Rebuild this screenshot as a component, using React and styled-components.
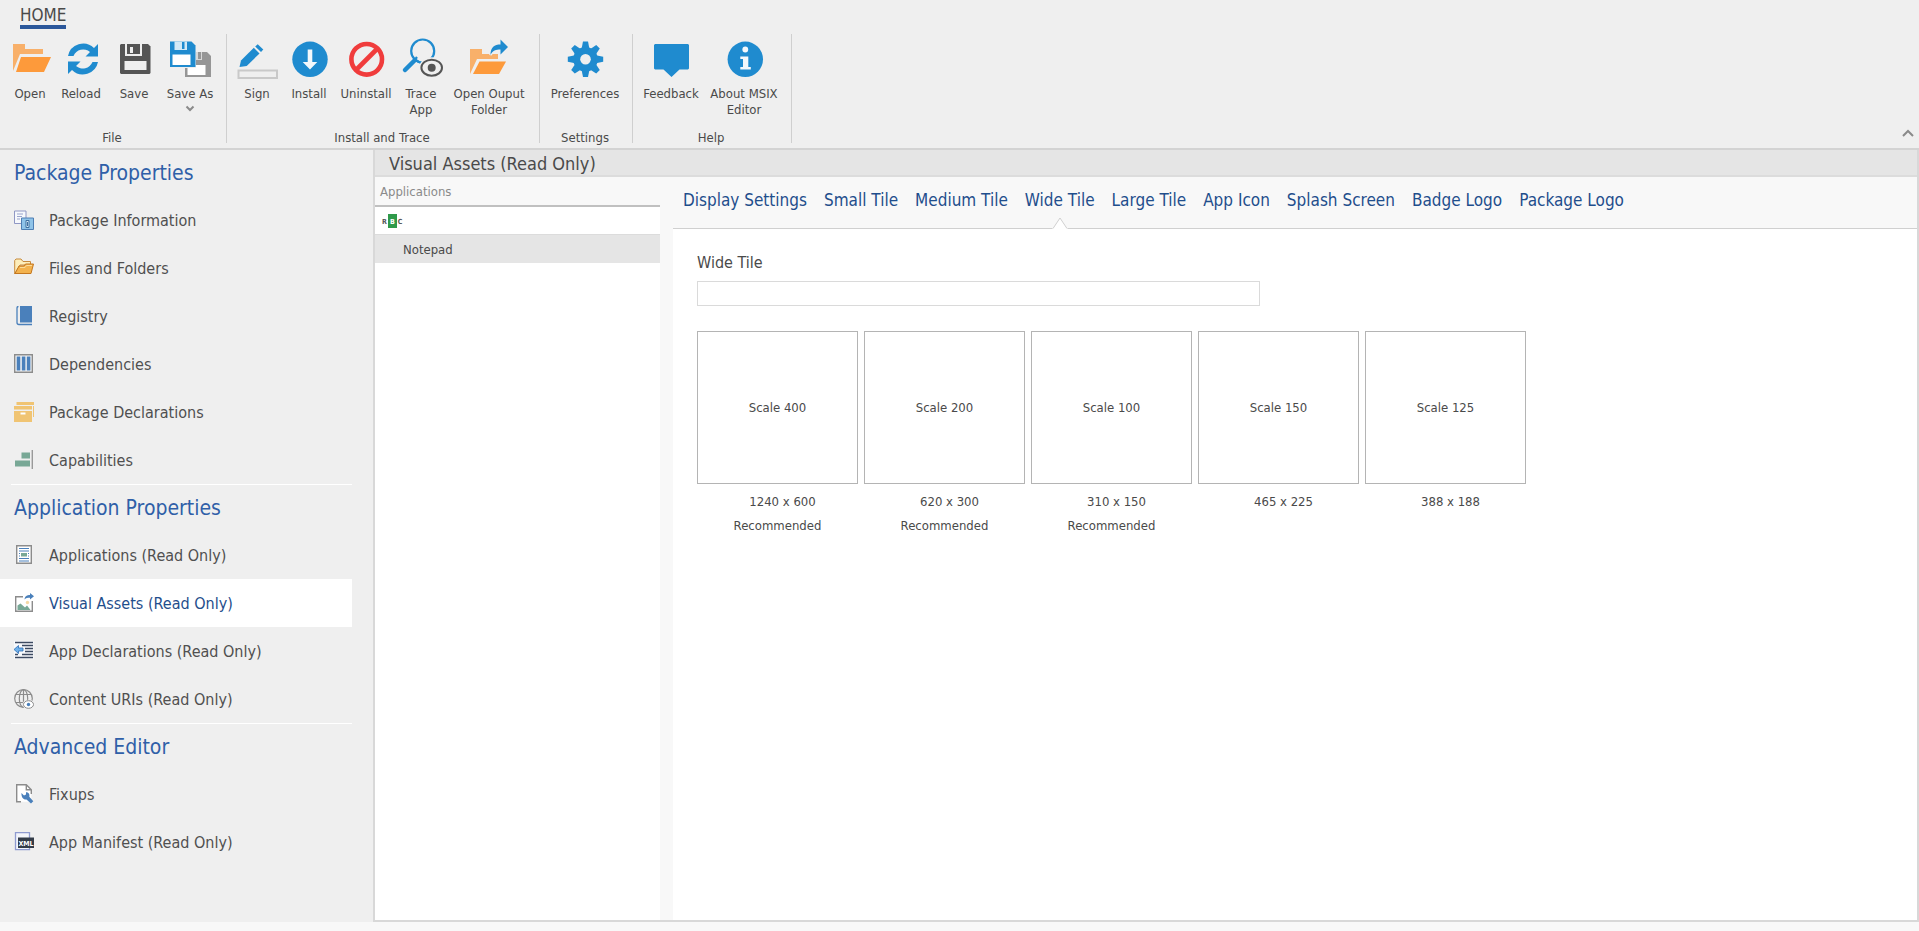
import { useState } from 'react'
import styled, { createGlobalStyle } from 'styled-components'

const GlobalStyle = createGlobalStyle`
  * {
    box-sizing: border-box;
  }

  body {
    margin: 0;
    background: #f8f8f8;
    color: #4a4a4a;
    font-family: "DejaVu Sans Condensed", "DejaVu Sans", Tahoma, sans-serif;
    font-size: 13px;
  }

  button, input {
    font-family: inherit;
    font-size: inherit;
    color: inherit;
  }
`

const Page = styled.div`
  min-height: 100vh;
  display: flex;
  flex-direction: column;
  padding-bottom: 9px;
`

/* ---------- ribbon ---------- */

const Ribbon = styled.header`
  position: relative;
  background: #efefef;
  border-bottom: 2px solid #d3d3d3;
`

const RibbonTabs = styled.div`
  display: flex;
  padding: 5px 20px 0;
`

const RibbonTab = styled.button`
  border: 0;
  border-bottom: 4px solid #2b579a;
  padding: 0;
  background: none;
  font-size: 17px;
  line-height: 20px;
  cursor: pointer;
`

const RibbonGroups = styled.div`
  display: flex;
  padding: 5px 0;
`

const RibbonGroup = styled.section`
  height: 109px;
  display: flex;
  flex-direction: column;
  justify-content: space-between;
  padding: 0 7px 0 5px;
  border-right: 1px solid #cfcfcf;
`

const RibbonItems = styled.div`
  display: flex;
`

const RibbonButton = styled.button`
  width: ${(props) => props.$width}px;
  display: flex;
  flex-direction: column;
  align-items: center;
  border: 0;
  padding: 4px 0 0;
  background: none;
  line-height: 16px;
  white-space: pre;
  cursor: pointer;
`

const RibbonIcon = styled.svg`
  width: 40px;
  height: 40px;
  margin-bottom: 8px;
  overflow: visible;
`

const DropArrow = styled.svg`
  width: 10px;
  height: 12px;
`

const GroupCaption = styled.div`
  line-height: 10px;
  text-align: center;
`

const CollapseButton = styled.button`
  position: absolute;
  right: 4px;
  bottom: 6px;
  display: flex;
  border: 0;
  padding: 0;
  background: none;
  cursor: pointer;
`

/* ---------- sidebar ---------- */

const Main = styled.div`
  flex: 1;
  display: flex;
`

const Sidebar = styled.nav`
  flex: 0 0 373px;
  background: #efefef;
  padding-right: 21px;
`

const SidebarSection = styled.section`
  & + & h2::before {
    content: "";
    display: block;
    height: 1px;
    margin-left: -3px;
    background: #ffffff;
  }
`

const SidebarTitle = styled.h2`
  margin: 0;
  padding-left: 14px;
  font-size: 21px;
  font-weight: normal;
  line-height: 46px;
  color: #2f5fa8;
`

const SidebarLink = styled.a`
  height: 48px;
  display: flex;
  align-items: center;
  gap: 15px;
  padding: 0 0 0 14px;
  font-size: 16px;
  text-decoration: none;
  color: ${(props) => (props.$active ? '#1f4e8c' : '#505050')};
  background: ${(props) => (props.$active ? '#ffffff' : 'transparent')};
`

const SidebarIcon = styled.svg`
  width: 20px;
  height: 20px;
`

/* ---------- content ---------- */

const Content = styled.main`
  flex: 1;
  display: flex;
  flex-direction: column;
  border: 2px solid #d8d8d8;
  border-top: 0;
`

const ContentTitle = styled.h1`
  margin: 0;
  padding: 2px 0 0 14px;
  background: #e5e5e5;
  border-bottom: 2px solid #dcdcdc;
  font-size: 18px;
  font-weight: normal;
  line-height: 23px;
`

const Columns = styled.div`
  flex: 1;
  display: flex;
  gap: 13px;
  background: #f8f8f8;
`

const AppList = styled.section`
  flex: 0 0 285px;
  display: flex;
  flex-direction: column;
`

const AppListHeader = styled.div`
  padding: 2px 0 0 5px;
  border-bottom: 2px solid #c0c0c0;
  line-height: 26px;
  color: #8a8a8a;
`

const FilterRow = styled.label`
  height: 28px;
  display: flex;
  align-items: center;
  gap: 4px;
  padding-left: 7px;
  border-bottom: 1px solid #dcdcdc;
  background: #ffffff;
`

const FilterInput = styled.input`
  flex: 1;
  min-width: 0;
  border: 0;
  outline: 0;
  background: none;
`

const AppListBody = styled.div`
  flex: 1;
  background: #ffffff;
`

const AppRow = styled.button`
  width: 100%;
  border: 0;
  padding: 2px 0 0 28px;
  background: #e5e5e5;
  line-height: 26px;
  text-align: left;
`

const Details = styled.section`
  flex: 1;
  display: flex;
  flex-direction: column;
`

const Tabs = styled.div`
  height: 52px;
  display: flex;
  gap: 17px;
  padding-left: 10px;
  border-bottom: 1px solid #d0d0d0;
`

const Tab = styled.button`
  position: relative;
  border: 0;
  padding: 0 0 6px;
  background: none;
  font-size: 17px;
  color: #1f4e8c;
  white-space: nowrap;
  cursor: pointer;
`

const TabPointer = styled.svg`
  position: absolute;
  left: 50%;
  bottom: -1px;
  width: 16px;
  height: 12px;
  margin-left: -8px;
`

const TabPanel = styled.div`
  flex: 1;
  padding: 23px 24px;
  background: #ffffff;
`

const FieldLabel = styled.label`
  display: block;
  font-size: 16px;
  line-height: 22px;
`

const PathInput = styled.input`
  display: block;
  width: 563px;
  height: 25px;
  margin: 7px 0 25px;
  border: 1px solid #dadada;
  background: #ffffff;
`

const Tiles = styled.div`
  display: flex;
  gap: 6px;
`

const Tile = styled.figure`
  width: 161px;
  margin: 0;
  text-align: center;
`

const TileBox = styled.button`
  display: block;
  width: 100%;
  height: 153px;
  border: 1px solid #b4b4b4;
  padding: 0;
  background: #ffffff;
`

const TileSize = styled.figcaption`
  padding: 6px 0 0 10px;
  line-height: 24px;
`

const TileNote = styled.div`
  line-height: 24px;
`

const BLUE = '#1f8bcf'

const ribbonIcons = {
  open: (
    <>
      <path d="M3 6h12v5h18v5H10L3 33z" fill="#f8b06a" />
      <path d="M11 19h30l-7 15H6z" fill="#fd9a3b" />
    </>
  ),
  reload: (
    <g fill={BLUE}>
      <path d="M7 18A15.500 15.500 0 0 1 33 10L37 6V18.500H24.500L29 14A10.500 10.500 0 0 0 12.500 18z" />
      <path d="M7 18A15.500 15.500 0 0 1 33 10L37 6V18.500H24.500L29 14A10.500 10.500 0 0 0 12.500 18z" transform="rotate(180 22 21)" />
    </g>
  ),
  save: (
    <>
      <path d="M7 6H34L36.500 8.500V35L35.500 36H7L6 35V7z" fill="#555" />
      <path d="M12 6v11h15V6" fill="none" stroke="#efefef" strokeWidth="2" />
      <path d="M16 9h3v6h-3z" fill="#efefef" />
      <path d="M10.500 23h22v9h-22z" fill="#efefef" />
    </>
  ),
  saveAs: (
    <>
      <path d="M15 14H37L41 18V39H15z" fill="#969696" />
      <path d="M23 14h9v8h-9z" fill="#d8d8d8" />
      <path d="M28 14h3v7h-3z" fill="#969696" />
      <path d="M17.500 27h18v10h-18z" fill="#fff" />
      <path d="M-0.500 3H22L26 7V30H-0.500z" fill="#efefef" />
      <path d="M0 3.500H21.500L25.500 7.500V29H0z" fill={BLUE} />
      <path d="M4.500 3.500H17v8.500H4.500z" fill="#d3e9f6" />
      <path d="M12 4h2.500v7H12z" fill={BLUE} />
      <path d="M2.500 16.500h18v10.500h-18z" fill="#fff" />
    </>
  ),
  sign: (
    <>
      <path d="M2.500 29L4 22.500L16.800 9.800L22.500 15.500L9.700 28z" fill={BLUE} />
      <path d="M18.200 8.400L20.700 6.300L26.300 11.500L24 14z" fill={BLUE} />
      <path d="M1.500 32.500h38.500v7.500H1.500z" fill="none" stroke="#c9c9c9" strokeWidth="2" />
    </>
  ),
  install: (
    <>
      <circle cx="21" cy="21.300" r="17.700" fill={BLUE} />
      <path d="M18.700 11.500h4.600v12.500h5L21 31.500L13.700 24h5z" fill="#f4f8fb" />
    </>
  ),
  uninstall: (
    <g fill="none" stroke="#f03c3c" strokeWidth="4.600">
      <circle cx="20.700" cy="21.300" r="15.300" />
      <path d="M10 32L31.500 10.500" />
    </g>
  ),
  trace: (
    <>
      <circle cx="21.700" cy="13" r="11.500" fill="none" stroke={BLUE} strokeWidth="2.200" />
      <path d="M4 32L13.500 22.500" stroke={BLUE} strokeWidth="4.500" strokeLinecap="round" />
      <path d="M13 23l3-4M14 22l5 2.500" stroke={BLUE} strokeWidth="2.200" />
      <ellipse cx="30.700" cy="29.700" rx="12.500" ry="10.500" fill="#efefef" />
      <ellipse cx="30.700" cy="29.700" rx="10.300" ry="8" fill="none" stroke="#555" strokeWidth="2" />
      <circle cx="30.700" cy="29.700" r="4" fill="#555" />
    </>
  ),
  openOutput: (
    <>
      <path d="M1 11h12v5h16v5H8L1 36z" fill="#f8b06a" />
      <path d="M10.500 23.500H37L30 36H4z" fill="#fd9a3b" />
      <path d="M21.500 17C21.500 9 25.500 6.500 31.500 6.500V1.500L39 9L31.500 16.500V11.500C27 11.500 23.500 12.500 21.500 17z" fill={BLUE} stroke="#efefef" strokeWidth="2.500" paintOrder="stroke" />
    </>
  ),
  preferences: (
    <>
      <circle cx="20.500" cy="21.300" r="12.300" fill={BLUE} />
      {[0, 45, 90, 135, 180, 225, 270, 315].map((angle) => (
        <path key={angle} d="M16.500 11L18 3.600H23L24.500 11z" fill={BLUE} transform={`rotate(${angle} 20.5 21.3)`} />
      ))}
      <circle cx="20.500" cy="21.300" r="5.300" fill="#efefef" />
    </>
  ),
  feedback: <path d="M4 6H37L38 7V30.500L37 31.500H28.500L20.500 39L12.500 31.500H4L3 30.500V7z" fill={BLUE} />,
  about: (
    <>
      <circle cx="21.300" cy="21.300" r="17.700" fill={BLUE} />
      <circle cx="21.300" cy="11.500" r="2.900" fill="#f4f8fb" />
      <path d="M16.300 18.500h8v10.500h2.500v2.500H16.300V29h2.700v-8h-2.700z" fill="#f4f8fb" />
    </>
  ),
}

const sidebarIcons = {
  info: (
    <>
      <path d="M.5 1h11.500v12.500H.5z" fill="#f6f8fc" stroke="#8f97c4" />
      <path d="M3 4h6M3 6.500h5M3 9h3" stroke="#9aa4cc" />
      <path d="M7.500 8h12v11.500h-12z" fill="#8fc3e8" stroke="#4f7fb4" />
      <path d="M12 10.500h3v7h-3z" fill="#d6ecf9" stroke="#3f6f9f" />
      <path d="M13.500 12v4" stroke="#3f6f9f" />
    </>
  ),
  folder: (
    <>
      <path d="M.7 16V2.500L2 1h5l2 2.500h7.500V7H6z" fill="#fdeebb" stroke="#c78a3c" />
      <path d="M5 8h5l1.500-2H19.500L17 15.500H1z" fill="#f3b24d" stroke="#c4771f" />
      <path d="M6 9.500h5l1.500-2h5.500" fill="none" stroke="#fbdc9a" />
    </>
  ),
  book: (
    <>
      <path d="M6 0h12v16.500H6z" fill="#4a80bb" />
      <path d="M4.500.5C3 .5 3 1.500 3 2.500v14c0 1.300.7 2 2 2H18" fill="none" stroke="#4a80bb" strokeWidth="1.300" />
    </>
  ),
  columns: (
    <>
      <path d="M.7.700h17.600v17.600H.7z" fill="#f4f4f4" stroke="#8c8c8c" strokeWidth="1.400" />
      <path d="M2.700 2.500h3.600v14H2.700zM7.800 2.500h3.600v14H7.800zM12.800 2.500h3.600v14h-3.600z" fill="#4a80bb" />
    </>
  ),
  boxes: (
    <>
      <path d="M2.500 0h17.500v3H2.500zM0 4h18v3.500H0zM19 4h1v11h-1z" fill="#f0c473" />
      <path d="M0 9h18v11H0z" fill="#f0c473" />
      <path d="M6.500 10.500h5v2h-5z" fill="#fff" />
    </>
  ),
  bars: (
    <>
      <path d="M7.500 2.500H16v6H7.500zM1 10.500h15v6H1z" fill="#78a896" />
      <path d="M18.300 0v19" stroke="#9a9a9a" strokeWidth="1.400" />
    </>
  ),
  document: (
    <>
      <path d="M2.700.700h14.600v17.600H2.700z" fill="#fff" stroke="#8c8c8c" strokeWidth="1.400" />
      <path d="M5 3.500h10M5 6h10M5 13.500h10M5 16h10M5 8.500h1M5 11h1M14 8.500h1M14 11h1" stroke="#4a80bb" />
      <path d="M7 8h6v3.500H7z" fill="#78a896" />
    </>
  ),
  picture: (
    <>
      <path d="M9 3.700H1.700v14.600h16.600V8" fill="none" stroke="#8c8c8c" strokeWidth="1.400" />
      <path d="M3.500 17v-4.500L6.500 10.500l4.500 4 2-2 3.500 4.500z" fill="#78a896" />
      <circle cx="13.500" cy="9.500" r="1.700" fill="#f5d9a5" />
      <path d="M10.500 6.500C11 3 13 2 16 2V0l4 3.300L16 6.500V4.800C13.500 4.800 12 5 10.500 6.500z" fill="#4a80bb" />
    </>
  ),
  declarations: (
    <>
      <path d="M0 0h19.500v18H0z" fill="#f7f9fc" />
      <path d="M1 1.500h18M8 4.500h11M11 7.500h8M11 10.500h8M8 13.500h11M1 13.500h3M1 16.500h18" stroke="#3d4a61" strokeWidth="1.400" />
      <path d="M0 8.500L4.500 4.500V7H9v3H4.500v2.500z" fill="#6fb1ea" stroke="#2f6db5" strokeWidth=".8" />
    </>
  ),
  globe: (
    <>
      <g fill="none" stroke="#8c8c8c" strokeWidth="1.200">
        <circle cx="9.500" cy="9.500" r="8.800" />
        <ellipse cx="9.500" cy="9.500" rx="4.200" ry="8.800" />
        <path d="M9.500 1v17M2 5.500h15M2 13.500h9" />
      </g>
      <ellipse cx="14.500" cy="15.500" rx="6" ry="4.800" fill="#efefef" />
      <ellipse cx="14.500" cy="15.500" rx="5" ry="3.800" fill="#fff" stroke="#8c8c8c" />
      <circle cx="14.500" cy="15.500" r="1.700" fill="#4a80bb" />
    </>
  ),
  fixups: (
    <>
      <path d="M2.700.700h9.600l5 5V17.800H2.700z" fill="#fff" />
      <path d="M7 17.800H2.700V.700h9.600l5 5V10M12.300.700v5h5" fill="none" stroke="#8c8c8c" strokeWidth="1.400" />
      <path d="M7.500 9l2.500 2.500 2-1V8.200c2.500 0 4 2 3.300 4.500l4 4.500-2.300 2.300-4.500-4C9.500 16 7 13 7.500 9z" fill="#4a80bb" />
    </>
  ),
  manifest: (
    <>
      <path d="M1.500.700h14v17h-14z" fill="#f3f5fb" stroke="#8f9bd0" strokeWidth="1.300" />
      <path d="M4 5.500h16v10.500H4z" fill="#333c49" />
      <text x="12" y="13.500" fontSize="7" fontWeight="bold" textAnchor="middle" fill="#fff">XML</text>
    </>
  ),
}

const ribbonGroups = [
  {
    caption: 'File',
    items: [
      { label: 'Open', icon: 'open', width: 50 },
      { label: 'Reload', icon: 'reload', width: 52 },
      { label: 'Save', icon: 'save', width: 54 },
      { label: 'Save As', icon: 'saveAs', width: 58, menu: true },
    ],
  },
  {
    caption: 'Install and Trace',
    items: [
      { label: 'Sign', icon: 'sign', width: 50 },
      { label: 'Install', icon: 'install', width: 54 },
      { label: 'Uninstall', icon: 'uninstall', width: 60 },
      { label: 'Trace\nApp', icon: 'trace', width: 50 },
      { label: 'Open Ouput\nFolder', icon: 'openOutput', width: 86 },
    ],
  },
  {
    caption: 'Settings',
    items: [{ label: 'Preferences', icon: 'preferences', width: 80 }],
  },
  {
    caption: 'Help',
    items: [
      { label: 'Feedback', icon: 'feedback', width: 66 },
      { label: 'About MSIX\nEditor', icon: 'about', width: 80 },
    ],
  },
]

const sidebarSections = [
  {
    title: 'Package Properties',
    links: [
      ['Package Information', 'info'],
      ['Files and Folders', 'folder'],
      ['Registry', 'book'],
      ['Dependencies', 'columns'],
      ['Package Declarations', 'boxes'],
      ['Capabilities', 'bars'],
    ],
  },
  {
    title: 'Application Properties',
    links: [
      ['Applications (Read Only)', 'document'],
      ['Visual Assets (Read Only)', 'picture'],
      ['App Declarations (Read Only)', 'declarations'],
      ['Content URIs (Read Only)', 'globe'],
    ],
  },
  {
    title: 'Advanced Editor',
    links: [
      ['Fixups', 'fixups'],
      ['App Manifest (Read Only)', 'manifest'],
    ],
  },
]

const tabs = [
  'Display Settings',
  'Small Tile',
  'Medium Tile',
  'Wide Tile',
  'Large Tile',
  'App Icon',
  'Splash Screen',
  'Badge Logo',
  'Package Logo',
]

const tiles = [
  { scale: 400, size: '1240 x 600', recommended: true },
  { scale: 200, size: '620 x 300', recommended: true },
  { scale: 100, size: '310 x 150', recommended: true },
  { scale: 150, size: '465 x 225' },
  { scale: 125, size: '388 x 188' },
]

function RibbonBar() {
  return (
    <Ribbon>
      <RibbonTabs>
        <RibbonTab>HOME</RibbonTab>
      </RibbonTabs>
      <RibbonGroups>
        {ribbonGroups.map((group) => (
          <RibbonGroup key={group.caption}>
            <RibbonItems>
              {group.items.map((item) => (
                <RibbonButton key={item.label} $width={item.width}>
                  <RibbonIcon viewBox="0 0 40 40">{ribbonIcons[item.icon]}</RibbonIcon>
                  {item.label}
                  {item.menu && (
                    <DropArrow viewBox="0 0 10 12">
                      <path d="M1.500 4.500L5 8l3.500-3.500" fill="none" stroke="#8a8a8a" strokeWidth="2" />
                    </DropArrow>
                  )}
                </RibbonButton>
              ))}
            </RibbonItems>
            <GroupCaption>{group.caption}</GroupCaption>
          </RibbonGroup>
        ))}
      </RibbonGroups>
      <CollapseButton aria-label="Collapse">
        <svg width="14" height="14" viewBox="0 0 14 14">
          <path d="M2 8l5-5 5 5" fill="none" stroke="#8a8a8a" strokeWidth="2" />
        </svg>
      </CollapseButton>
    </Ribbon>
  )
}

function SidebarNav() {
  const [active, setActive] = useState('Visual Assets (Read Only)')

  return (
    <Sidebar>
      {sidebarSections.map((section) => (
        <SidebarSection key={section.title}>
          <SidebarTitle>{section.title}</SidebarTitle>
          {section.links.map(([label, icon]) => (
            <SidebarLink key={label} href="#" $active={label === active} onClick={() => setActive(label)}>
              <SidebarIcon viewBox="0 0 20 20">{sidebarIcons[icon]}</SidebarIcon>
              {label}
            </SidebarLink>
          ))}
        </SidebarSection>
      ))}
    </Sidebar>
  )
}

export default function App() {
  const [tab, setTab] = useState('Wide Tile')

  return (
    <Page>
      <GlobalStyle />
      <RibbonBar />
      <Main>
        <SidebarNav />
        <Content>
          <ContentTitle>Visual Assets (Read Only)</ContentTitle>
          <Columns>
            <AppList>
              <AppListHeader>Applications</AppListHeader>
              <FilterRow>
                <svg width="21" height="14" viewBox="0 0 21 14" fontSize="7" fontWeight="bold" textAnchor="middle">
                  <path d="M6 0h9v14H6z" fill="#2f9a4a" />
                  <text x="2.500" y="9.500" fill="#555">R</text>
                  <text x="10.500" y="9.500" fill="#fff">B</text>
                  <text x="18" y="9.500" fill="#555">C</text>
                </svg>
                <FilterInput aria-label="Filter applications" />
              </FilterRow>
              <AppListBody>
                <AppRow>Notepad</AppRow>
              </AppListBody>
            </AppList>
            <Details>
              <Tabs role="tablist">
                {tabs.map((name) => (
                  <Tab key={name} role="tab" aria-selected={name === tab} onClick={() => setTab(name)}>
                    {name}
                    {name === tab && (
                      <TabPointer viewBox="0 0 16 12">
                        <path d="M0 12L1 11L8 1L15 11L16 12z" fill="#ffffff" />
                        <path d="M1 11.500L8 1L15 11.500" fill="none" stroke="#d0d0d0" />
                      </TabPointer>
                    )}
                  </Tab>
                ))}
              </Tabs>
              <TabPanel>
                <FieldLabel htmlFor="tile-path">Wide Tile</FieldLabel>
                <PathInput id="tile-path" />
                <Tiles>
                  {tiles.map((tile) => (
                    <Tile key={tile.scale}>
                      <TileBox>Scale {tile.scale}</TileBox>
                      <TileSize>{tile.size}</TileSize>
                      {tile.recommended && <TileNote>Recommended</TileNote>}
                    </Tile>
                  ))}
                </Tiles>
              </TabPanel>
            </Details>
          </Columns>
        </Content>
      </Main>
    </Page>
  )
}
